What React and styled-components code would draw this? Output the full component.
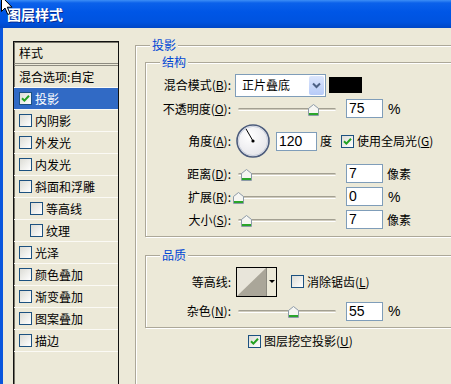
import React from "react";
import styled, { createGlobalStyle } from "styled-components";

const GlobalStyle = createGlobalStyle`
  html, body {
    margin: 0;
    padding: 0;
    background: #ece9d8;
  }
  body {
    font-family: "Noto Sans CJK SC", "Noto Sans", sans-serif;
    font-size: 12px;
    line-height: 16px;
    color: #000;
  }
`;

const Window = styled.div`
  position: relative;
  width: 451px;
  height: 384px;
  overflow: hidden;
  background: #ece9d8;
  display: flex;
  flex-direction: column;
`;

const TitleBar = styled.div`
  height: 28px;
  flex: none;
  display: flex;
  align-items: center;
  padding-left: 7px;
  background: linear-gradient(#3d8ef6 0, #0b61ea 3px, #0056e6 12px, #0053df 22px, #0047c6 28px);
  color: #fff;
  font: bold 14px "Noto Sans CJK SC", sans-serif;
  letter-spacing: 0;
  text-shadow: 1px 1px 0 #0a2a8c;
`;

const Cursor = styled.svg`
  position: absolute;
  left: 0;
  top: -4px;
`;

const Frame = styled.div`
  flex: 1;
  min-height: 0;
  display: flex;
  align-items: flex-start;
  border-left: 3px solid #0855dd;
  padding: 13px 0 0 10px;
`;

const StyleList = styled.div`
  width: 104px;
  height: 360px;
  flex: none;
  border: 1px solid #111;
  box-shadow: inset 1px 1px 0 #77756a;
`;

const ListHead = styled.div`
  height: 21px;
  display: flex;
  align-items: center;
  padding-left: 5px;
  border-bottom: 3px double #8d8b80;
`;

const ListItem = styled.div`
  height: 21px;
  display: flex;
  align-items: center;
  gap: 3px;
  padding-left: ${(p) => p.$indent}px;
  border-bottom: 1px solid #fbfaf5;
  background: ${(p) => (p.$active ? "#316ac5" : "transparent")};
  color: ${(p) => (p.$active ? "#fff" : "#000")};
`;

const Box = styled.span`
  width: 11px;
  height: 11px;
  flex: none;
  border: 1px solid #1c5180;
  background: linear-gradient(135deg, #dcdcd5, #fff);
  display: inline-flex;
  align-items: center;
  justify-content: center;
`;

const Check = ({ checked }) => (
  <Box>
    {checked && (
      <svg width="9" height="9" viewBox="0 0 9 9">
        <path d="M1 4.2 L3.4 6.6 L8 1.8" fill="none" stroke="#21a121" strokeWidth="2" />
      </svg>
    )}
  </Box>
);

const Group = styled.div`
  position: relative;
  flex: none;
  width: ${(p) => p.$w}px;
  margin-top: ${(p) => p.$mt || 0}px;
  padding: ${(p) => p.$pad};
  border: 1px solid #aca899;
  box-shadow: inset 1px 1px 0 #fff, 1px 1px 0 #fff;
`;

const Outer = styled(Group)`
  margin-left: 16px;
  height: 400px;
`;

const GroupTitle = styled.span`
  position: absolute;
  top: -9px;
  left: 14px;
  padding: 0 2px;
  background: #ece9d8;
  color: #0046d5;
  line-height: 16px;
`;

const Row = styled.div`
  display: flex;
  align-items: center;
  height: ${(p) => p.$h}px;
  padding-left: ${(p) => p.$pl || 0}px;
`;

const Label = styled.span`
  width: 85px;
  flex: none;
  margin-right: 4px;
  text-align: right;
  white-space: nowrap;
`;

const Select = styled.div`
  width: 89px;
  height: 21px;
  flex: none;
  display: flex;
  align-items: center;
  justify-content: space-between;
  padding-left: 0;
  border: 1px solid #7f9db9;
  background: #fff;
  span {
    padding-left: 6px;
  }
`;

const DropButton = styled.div`
  width: 15px;
  height: 19px;
  margin-right: 1px;
  border-radius: 2px;
  background: linear-gradient(#dce6fc, #b7cbf8);
  border: 0;
  display: flex;
  align-items: center;
  justify-content: center;
`;

const Swatch = styled.div`
  width: 33px;
  height: 16px;
  flex: none;
  margin-left: 3px;
  background: #000;
`;

const SliderWrap = styled.div`
  position: relative;
  width: 103px;
  height: 20px;
  flex: none;
`;

const Track = styled.div`
  position: absolute;
  left: 3px;
  right: 2px;
  top: 9px;
  height: 1px;
  border-top: 1px solid #a3a092;
  border-bottom: 1px solid #fff;
  background: #cfcbbd;
  border-radius: 2px;
`;

const Thumb = styled.svg`
  position: absolute;
  top: 5px;
`;

const Slider = ({ pos }) => (
  <SliderWrap>
    <Track />
    <Thumb width="11" height="12" viewBox="0 0 11 12" style={{ left: 3 + pos * 100 - 5.5 }}>
      <path d="M0.5 4.5 L5.5 0.5 L10.5 4.5 V11.5 H0.5 Z" fill="#f6f6f2" stroke="#8c9aa8" />
      <rect x="1" y="9" width="9" height="2" fill="#2aa52a" />
    </Thumb>
  </SliderWrap>
);

const NumInput = styled.div`
  width: ${(p) => p.$w || 35}px;
  height: 17px;
  flex: none;
  margin-left: ${(p) => p.$ml}px;
  border: 1px solid #7f9db9;
  background: #fff;
  padding-left: 2px;
  box-sizing: content-box;
  font: 14px/17px "Liberation Sans", Arial, sans-serif;
  width: ${(p) => (p.$w || 37) - 4}px;
`;

const Unit = styled.span`
  margin-left: ${(p) => p.$ml || 4}px;
  font-family: ${(p) => (p.$latin ? '"Liberation Sans", Arial, sans-serif' : '"Noto Sans CJK SC", sans-serif')};
  font-size: ${(p) => (p.$latin ? 14 : 12)}px;
  white-space: nowrap;
`;

const CheckLabel = styled.span`
  margin-left: 3px;
  white-space: nowrap;
`;

const Dial = styled.svg`
  flex: none;
  margin-left: 1px;
`;

const Contour = styled.div`
  width: 39px;
  height: 28px;
  flex: none;
  margin-left: 1px;
  border: 1px solid #000;
  display: flex;
  background: #ece9d8;
`;

const ContourGraph = styled.svg`
  flex: none;
  border-right: 1px solid #8c8a80;
`;

const ContourArrow = styled.div`
  flex: 1;
  display: flex;
  align-items: center;
  justify-content: center;
  &::after {
    content: "";
    border-left: 3px solid transparent;
    border-right: 3px solid transparent;
    border-top: 3px solid #000;
  }
`;

const lists = [
  { name: "投影", checked: true, active: true },
  { name: "内阴影" },
  { name: "外发光" },
  { name: "内发光" },
  { name: "斜面和浮雕" },
  { name: "等高线", indent: true },
  { name: "纹理", indent: true },
  { name: "光泽" },
  { name: "颜色叠加" },
  { name: "渐变叠加" },
  { name: "图案叠加" },
  { name: "描边" },
];

const App = () => {
  const angle = (120 * Math.PI) / 180;
  const hx = 17 + 14 * Math.cos(angle);
  const hy = 17 - 14 * Math.sin(angle);

  return (
    <Window>
      <GlobalStyle />
      <TitleBar>图层样式</TitleBar>
      <Cursor width="14" height="20" viewBox="0 0 14 20">
        <path d="M1.5 0.5 V15.5 L5 12 L7.8 18.5 L10 17.5 L7.3 11.2 H12 Z" fill="#fff" stroke="#000" />
      </Cursor>
      <Frame>
        <StyleList>
          <ListHead>样式</ListHead>
          <ListItem $indent={5}>混合选项:自定</ListItem>
          {lists.map((it) => (
            <ListItem key={it.name} $indent={it.indent ? 16 : 5} $active={it.active}>
              <Check checked={it.checked} />
              {it.name}
            </ListItem>
          ))}
        </StyleList>

        <Outer $w={330} $mt={4} $pad="16px 0 0 9px">
          <GroupTitle>投影</GroupTitle>

          <Group $w={320} $pad="10px 0 5px 0">
            <GroupTitle>结构</GroupTitle>
            <Row $h={24}>
              <Label>混合模式(<u>B</u>):</Label>
              <Select>
                <span>正片叠底</span>
                <DropButton>
                  <svg width="9" height="7" viewBox="0 0 9 7">
                    <path d="M1 1.5 L4.5 5 L8 1.5" fill="none" stroke="#4d6185" strokeWidth="2" />
                  </svg>
                </DropButton>
              </Select>
              <Swatch />
            </Row>
            <Row $h={23}>
              <Label>不透明度(<u>O</u>):</Label>
              <Slider pos={0.75} />
              <NumInput $ml={8}>75</NumInput>
              <Unit $latin $ml={5}>%</Unit>
            </Row>
            <Row $h={42}>
              <Label>角度(<u>A</u>):</Label>
              <Dial width="34" height="34" viewBox="0 0 34 34">
                <defs>
                  <radialGradient id="dialFill" cx="40%" cy="35%" r="70%">
                    <stop offset="0" stopColor="#ffffff" />
                    <stop offset="1" stopColor="#e4e4e8" />
                  </radialGradient>
                </defs>
                <circle cx="17" cy="17" r="16" fill="url(#dialFill)" stroke="#4c5c7c" strokeWidth="1.6" />
                <circle cx="17" cy="17" r="14.6" fill="none" stroke="#c9cfdc" strokeWidth="1" />
                <line x1="17" y1="17" x2={hx} y2={hy} stroke="#000" strokeWidth="1" />
                <circle cx="17" cy="17" r="1.6" fill="#000" />
              </Dial>
              <NumInput $ml={6} $w={41}>120</NumInput>
              <Unit $ml={3}>度</Unit>
              <span style={{ marginLeft: 9, display: "inline-flex" }}>
                <Check checked />
              </span>
              <CheckLabel>使用全局光(<u>G</u>)</CheckLabel>
            </Row>
            <Row $h={23}>
              <Label>距离(<u>D</u>):</Label>
              <Slider pos={0.08} />
              <NumInput $ml={8}>7</NumInput>
              <Unit $ml={4}>像素</Unit>
            </Row>
            <Row $h={23}>
              <Label>扩展(<u>R</u>):</Label>
              <Slider pos={0} />
              <NumInput $ml={8}>0</NumInput>
              <Unit $latin $ml={5}>%</Unit>
            </Row>
            <Row $h={23}>
              <Label>大小(<u>S</u>):</Label>
              <Slider pos={0.08} />
              <NumInput $ml={8}>7</NumInput>
              <Unit $ml={4}>像素</Unit>
            </Row>
          </Group>

          <Group $w={320} $mt={18} $pad="8px 0 4px 0">
            <GroupTitle>品质</GroupTitle>
            <Row $h={35}>
              <Label>等高线:</Label>
              <Contour>
                <ContourGraph width="29" height="28" viewBox="0 0 29 28">
                  <rect x="0" y="0" width="29" height="28" fill="#e8e5da" />
                  <path d="M0 28 L29 0 V28 Z" fill="#aaa699" />
                </ContourGraph>
                <ContourArrow />
              </Contour>
              <span style={{ marginLeft: 14, display: "inline-flex" }}>
                <Check />
              </span>
              <CheckLabel>消除锯齿(<u>L</u>)</CheckLabel>
            </Row>
            <Row $h={24}>
              <Label>杂色(<u>N</u>):</Label>
              <Slider pos={0.55} />
              <NumInput $ml={8}>55</NumInput>
              <Unit $latin $ml={5}>%</Unit>
            </Row>
          </Group>

          <Row $h={14} $pl={103} style={{ marginTop: 6 }}>
            <Check checked />
            <CheckLabel>图层挖空投影(<u>U</u>)</CheckLabel>
          </Row>
        </Outer>
      </Frame>
    </Window>
  );
};

export default App;
